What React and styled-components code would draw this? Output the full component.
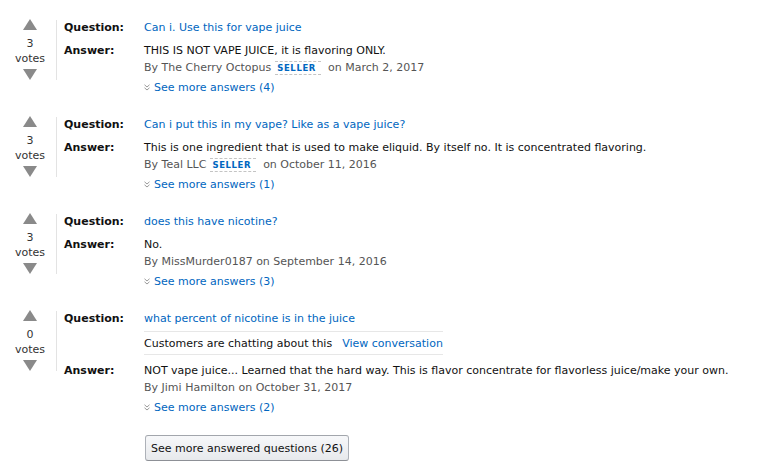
import React from 'react';
import styled, { createGlobalStyle } from 'styled-components';

const GlobalStyle = createGlobalStyle`
  body {
    margin: 0;
    background: #fff;
    font-family: "DejaVu Sans", Verdana, sans-serif;
    font-size: 11px;
    color: #111;
  }
`;

const Page = styled.div`
  padding: 19px 0 0 16px;
  width: 768px;
  height: 466px;
  box-sizing: border-box;
  overflow: hidden;
`;

const Block = styled.div`
  display: flex;
  margin-bottom: ${p => p.gap}px;
`;

const VoteCol = styled.div`
  width: 28px;
  display: flex;
  flex-direction: column;
  align-items: center;
  color: #333;
  line-height: 15px;
`;

const Arrow = styled.div`
  width: 0;
  height: 0;
  border-left: 7px solid transparent;
  border-right: 7px solid transparent;
  ${p => p.down
    ? 'border-top: 11px solid #8a8a8a; margin-top: 3px;'
    : 'border-bottom: 11px solid #8a8a8a; margin-bottom: 6px;'}
`;

const Divider = styled.div`
  width: 1px;
  background: #e3e3e3;
  margin: 1px 7px 0 12px;
  height: ${p => p.h}px;
`;

const Content = styled.div`
  display: flex;
  flex-direction: column;
`;

const Row = styled.div`
  display: grid;
  grid-template-columns: 80px auto;
  line-height: 17px;
  margin-bottom: ${p => p.mb || 0}px;
`;

const Label = styled.div`
  font-weight: bold;
  color: #111;
`;

const Link = styled.a`
  color: #0066c0;
  text-decoration: none;
`;

const Meta = styled.div`
  color: #555;
  line-height: 17px;
  white-space: nowrap;
`;

const Seller = styled.span`
  display: inline-block;
  font-size: 8.5px;
  font-weight: bold;
  color: #0066c0;
  letter-spacing: 0.6px;
  padding: 0 5px 0 2px;
  line-height: 12px;
  border-top: 1px dashed #c4c4c4;
  border-bottom: 1px dashed #c4c4c4;
  margin: 0 7px 0 4px;
`;

const More = styled.div`
  margin-top: 3px;
  line-height: 17px;
  color: #0066c0;
  display: flex;
  align-items: center;
  gap: 4px;
`;

const Chev = () => (
  <svg width="6" height="7" viewBox="0 0 6 7">
    <path d="M0.5 0.8 L3 3 L5.5 0.8 M0.5 3.8 L3 6 L5.5 3.8" fill="none" stroke="#999" strokeWidth="1" />
  </svg>
);

const Chat = styled.div`
  border-top: 1px solid #e7e7e7;
  border-bottom: 1px solid #e7e7e7;
  padding: 4px 0 3px;
  margin: 4px 0 7px;
  line-height: 15px;
  display: flex;
  gap: 10px;
  white-space: nowrap;
  width: max-content;
`;

const Button = styled.button`
  display: block;
  margin: 0 0 0 129px;
  height: 26px;
  padding: 0 5px;
  white-space: nowrap;
  font-family: inherit;
  font-size: 11px;
  color: #111;
  background: linear-gradient(#f7f8fa, #e7e9ec);
  border: 1px solid #adb1b8;
  border-top-color: #a2a6ac;
  border-bottom-color: #8d9096;
  border-radius: 3px;
  cursor: pointer;
`;

const Votes = ({ n }) => (
  <VoteCol>
    <Arrow />
    <div>{n}</div>
    <div>votes</div>
    <Arrow down />
  </VoteCol>
);

const qa = [
  {
    votes: 3,
    q: 'Can i. Use this for vape juice',
    a: 'THIS IS NOT VAPE JUICE, it is flavoring ONLY.',
    by: 'The Cherry Octopus',
    seller: true,
    date: 'March 2, 2017',
    more: 4,
  },
  {
    votes: 3,
    q: 'Can i put this in my vape? Like as a vape juice?',
    a: 'This is one ingredient that is used to make eliquid. By itself no. It is concentrated flavoring.',
    by: 'Teal LLC',
    seller: true,
    date: 'October 11, 2016',
    more: 1,
  },
  {
    votes: 3,
    q: 'does this have nicotine?',
    a: 'No.',
    by: 'MissMurder0187',
    date: 'September 14, 2016',
    more: 3,
  },
  {
    votes: 0,
    q: 'what percent of nicotine is in the juice',
    chat: true,
    a: 'NOT vape juice... Learned that the hard way. This is flavor concentrate for flavorless juice/make your own.',
    by: 'Jimi Hamilton',
    date: 'October 31, 2017',
    more: 2,
  },
];

export default function App() {
  return (
    <Page>
      <GlobalStyle />
      {qa.map((item, i) => (
        <Block key={i} gap={i === qa.length - 1 ? 19 : 20}>
          <Votes n={item.votes} />
          <Divider h={60} />
          <Content>
            <Row mb={item.chat ? 0 : 6}>
              <Label>Question:</Label>
              <Link href="#">{item.q}</Link>
            </Row>
            {item.chat && (
              <Row>
                <div />
                <Chat>
                  <span>Customers are chatting about this</span>
                  <Link href="#">View conversation</Link>
                </Chat>
              </Row>
            )}
            <Row>
              <Label>Answer:</Label>
              <div>
                <div>{item.a}</div>
                <Meta>
                  By {item.by}
                  {item.seller ? <Seller>SELLER</Seller> : ' '}
                  on {item.date}
                </Meta>
                <More>
                  <Chev />
                  <span>See more answers ({item.more})</span>
                </More>
              </div>
            </Row>
          </Content>
        </Block>
      ))}
      <Button>See more answered questions (26)</Button>
    </Page>
  );
}
